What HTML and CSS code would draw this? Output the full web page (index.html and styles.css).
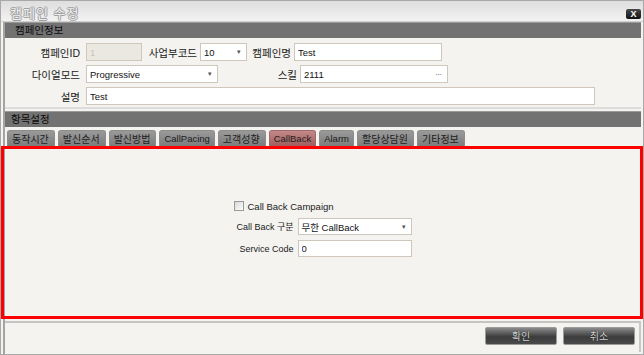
FILE: index.html
```html
<!DOCTYPE html>
<html lang="ko">

<head>
  <meta charset="UTF-8">
  <title>캠페인 수정</title>
  <link rel="stylesheet" href="styles.css">
</head>

<body>
  <div class="ventana">
    <div class="titulo">
      <span class="titulo-texto">캠페인 수정</span>
      <span class="cerrar">X</span>
    </div>

    <div class="marco">
      <div class="seccion">캠페인정보</div>
      <div class="formulario">
        <div class="fila">
          <label class="etiqueta ancho-75">캠페인ID</label>
          <input class="campo deshabilitado ancho-56" value="1" disabled>
          <label class="etiqueta ancho-58">사업부코드</label>
          <div class="campo combo ancho-47"><span>10</span><span class="flecha">▾</span></div>
          <label class="etiqueta ancho-47">캠페인명</label>
          <input class="campo ancho-148" value="Test">
        </div>
        <div class="fila">
          <label class="etiqueta ancho-75">다이얼모드</label>
          <div class="campo combo ancho-132"><span>Progressive</span><span class="flecha">▾</span></div>
          <label class="etiqueta ancho-79">스킬</label>
          <div class="campo combo ancho-148"><span>2111</span><span class="puntos">···</span></div>
        </div>
        <div class="fila">
          <label class="etiqueta ancho-75">설명</label>
          <input class="campo ancho-509" value="Test">
        </div>
      </div>

      <div class="seccion seccion-2">항목설정</div>
      <div class="pestanas">
        <span class="pestana">동작시간</span>
        <span class="pestana">발신순서</span>
        <span class="pestana">발신방법</span>
        <span class="pestana latin">CallPacing</span>
        <span class="pestana">고객성향</span>
        <span class="pestana latin activa">CallBack</span>
        <span class="pestana latin">Alarm</span>
        <span class="pestana">할당상담원</span>
        <span class="pestana">기타정보</span>
      </div>

      <div class="contenido">
        <div class="rejilla">
          <label class="check-fila">
            <span class="check"></span>
            <span>Call Back Campaign</span>
          </label>
          <label class="etiqueta-c">Call Back 구분</label>
          <div class="campo combo ancho-114"><span>무한 CallBack</span><span class="flecha">▾</span></div>
          <label class="etiqueta-c">Service Code</label>
          <input class="campo ancho-114" value="0">
        </div>
      </div>

      <div class="pie">
        <button class="boton">확인</button>
        <button class="boton">취소</button>
      </div>
    </div>
  </div>
</body>

</html>
```

FILE: styles.css
```css
* {
  box-sizing: border-box;
}

body {
  margin: 0;
  background: #ffffff;
  font-family: "Liberation Sans", "Noto Sans CJK KR", sans-serif;
  font-size: 9.5px;
  color: #1a1a1a;
}

.ventana {
  width: 644px;
  height: 355px;
  display: flex;
  flex-direction: column;
  background: #f4f3ef;
  border: 1px solid #a8a8a8;
}

/* barra de titulo */
.titulo {
  height: 21px;
  flex: none;
  display: flex;
  align-items: center;
  justify-content: space-between;
  padding: 0 2px 0 9px;
  background: linear-gradient(#dedede, #f2f2f2);
  border-bottom: 1px solid #cfcfcf;
}

.titulo-texto {
  font-family: "Noto Sans CJK KR", sans-serif;
  font-size: 13px;
  color: #eeeeee;
  letter-spacing: 1px;
  text-shadow: 1px 0 0 #a0a0a0, -1px 0 0 #a0a0a0, 0 1px 0 #a0a0a0, 0 -1px 0 #a0a0a0;
  margin-top: 2px;
}

.cerrar {
  width: 15px;
  height: 10px;
  margin-top: 5px;
  border-radius: 2px;
  background: linear-gradient(#4a4a4a, #111111);
  color: #ffffff;
  font-size: 9px;
  font-weight: bold;
  line-height: 10px;
  text-align: center;
}

.marco {
  flex: 1;
  display: flex;
  flex-direction: column;
  margin-left: 2px;
  border-left: 2px solid #a4a4a4;
  padding-right: 2px;
}

.seccion {
  height: 16px;
  flex: none;
  background: #727272;
  border-top: 1px solid #9a9a9a;
  padding-left: 10px;
  font-family: "Noto Sans CJK KR", sans-serif;
  font-size: 10.5px;
  line-height: 14px;
  color: #0a0a0a;
}

.seccion-2 {
  margin-top: 2px;
  padding-left: 6px;
}

/* formulario superior */
.formulario {
  display: flex;
  flex-direction: column;
  gap: 4px;
  padding: 5px 0 2px 0;
  border-bottom: 2px solid #dcdcdc;
}

.fila {
  display: flex;
  align-items: center;
}

.etiqueta {
  text-align: right;
  padding-right: 6px;
  font-size: 10.5px;
  flex: none;
}

.campo {
  height: 18px;
  border: 1px solid #cfc6bc;
  background: #ffffff;
  font-family: "Liberation Sans", "Noto Sans CJK KR", sans-serif;
  font-size: 9.5px;
  color: #111111;
  padding: 0 3px;
  flex: none;
  outline: none;
}

.deshabilitado {
  background: #ebe8e2;
  color: #c8c4bc;
}

.combo {
  display: flex;
  align-items: center;
  justify-content: space-between;
}

.flecha {
  font-size: 7px;
  color: #555555;
  padding-right: 2px;
}

.puntos {
  font-size: 9px;
  color: #888888;
  letter-spacing: -1px;
  padding-right: 3px;
}

.ancho-47 { width: 47px; }
.ancho-56 { width: 56px; }
.ancho-58 { width: 58px; }
.ancho-75 { width: 81px; }
.ancho-79 { width: 82px; }
.ancho-114 { width: 114px; }
.ancho-132 { width: 132px; }
.ancho-148 { width: 148px; }
.ancho-509 { width: 509px; }

.fila .ancho-58,
.fila .ancho-47,
.fila .ancho-79 {
  padding-right: 3px;
}

/* pestañas */
.pestanas {
  display: flex;
  gap: 3px;
  padding: 3px 0 0 2px;
  height: 19px;
  flex: none;
}

.pestana {
  height: 16px;
  padding: 0 5px 0 4px;
  border-radius: 3px 3px 0 0;
  background: linear-gradient(#9a9a9a, #7c7c7c);
  border: 1px solid #8c8c8c;
  border-bottom: none;
  font-family: "Noto Sans CJK KR", sans-serif;
  font-size: 10px;
  line-height: 15px;
  color: #202020;
}

.latin {
  font-family: "Liberation Sans", sans-serif;
  font-size: 9.5px;
  padding: 0 4px;
}

.activa {
  background: linear-gradient(#c48888, #a05e5e);
  border-color: #a06868;
}

/* contenido de la pestaña */
.contenido {
  height: 173px;
  flex: none;
  margin-left: -4px;
  margin-right: -2px;
  border: 3px solid #ff0000;
  display: flex;
  justify-content: center;
  align-items: flex-start;
  padding-top: 50px;
}

.rejilla {
  display: grid;
  grid-template-columns: 64px 114px;
  grid-template-rows: 14px 17px 17px;
  row-gap: 5px;
  align-items: center;
  margin-left: 1px;
}

.rejilla .campo {
  height: 17px;
}

.check-fila {
  grid-column: 1 / 3;
  display: flex;
  align-items: center;
  gap: 4px;
}

.check {
  width: 10px;
  height: 10px;
  border: 1px solid #9a9a9a;
  background: linear-gradient(135deg, #d8d8d8, #ffffff);
}

.etiqueta-c {
  text-align: right;
  padding-right: 4px;
  font-size: 9px;
  white-space: nowrap;
  direction: rtl;
}

/* pie con botones */
.pie {
  flex: 1;
  margin-top: 2px;
  margin-bottom: 2px;
  border-top: 2px solid #c4c4c4;
  border-right: 2px solid #c8c8c8;
  display: flex;
  justify-content: flex-end;
  align-items: flex-start;
  gap: 6px;
  padding: 4px 4px 0 0;
}

.boton {
  width: 72px;
  height: 18px;
  border: 1px solid #9a9a9a;
  border-radius: 2px;
  background: linear-gradient(#8a8a8a, #3c3c3c 55%, #4a4a4a);
  color: #d8d8d8;
  font-family: "Noto Sans CJK KR", sans-serif;
  font-size: 10px;
  line-height: 14px;
  text-shadow: 0 0 1px #000000;
  cursor: pointer;
}
```
